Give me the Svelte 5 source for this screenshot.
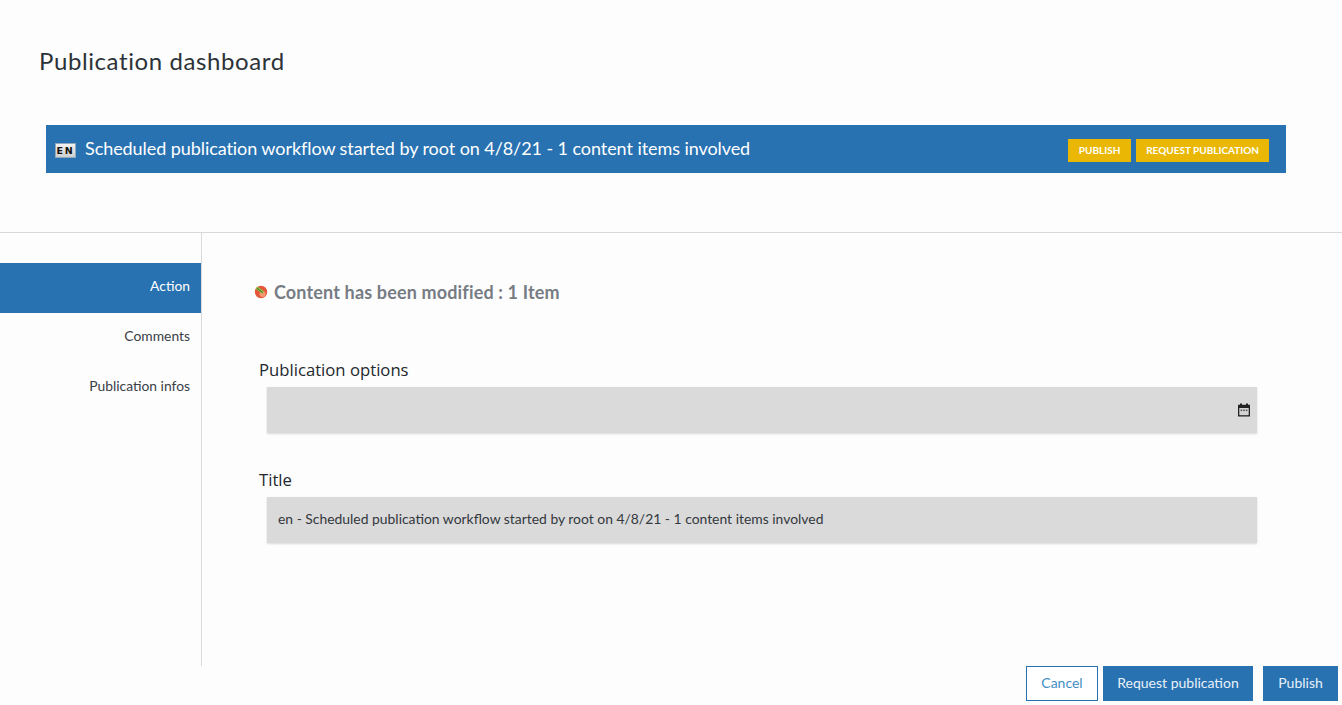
<script>
  const tabs = ['Action', 'Comments', 'Publication infos'];
</script>

<div class="page">
  <header class="head"><h1>Publication dashboard</h1></header>
  <section class="banner">
    <div class="banner-title">
      <span class="flag">EN</span>
      <span class="banner-text">Scheduled publication workflow started by root on 4/8/21 - 1 content items involved</span>
    </div>
    <div class="banner-actions">
      <button class="mini publish">PUBLISH</button>
      <button class="mini">REQUEST PUBLICATION</button>
    </div>
  </section>
  <div class="body">
    <nav class="side">
      {#each tabs as t, i}
        <div class="tab" class:active={i === 0}>{t}</div>
      {/each}
    </nav>
    <main class="content">
      <div class="status">
        <svg width="14" height="14" viewBox="0 0 14 14">
          <circle cx="7" cy="7" r="6.2" fill="#e4573a" />
          <circle cx="8.5" cy="9" r="3" fill="#f49a70" />
          <path d="M1.6 3.8 L3.6 1.6 L10 6.6 L8.4 8.8 Z" fill="#8cc246" />
          <path d="M3 3.2 L8.6 7.6" stroke="#2f5d1e" stroke-width="0.8" />
        </svg>
        <span>Content has been modified : 1 Item</span>
      </div>
      <div class="field">
        <div class="label">Publication options</div>
        <div class="input">
          <svg class="cal" width="14" height="14" viewBox="0 0 14 14">
            <path d="M3 0.5h2v1.2h4V0.5h2v1.2h2V13.5H1V1.7h2z" fill="#222" />
            <rect x="2.3" y="5" width="9.4" height="7.2" fill="#d4d4d4" />
            <rect x="3.6" y="6.5" width="1.6" height="1.6" fill="#555" />
            <rect x="6.2" y="6.5" width="1.6" height="1.6" fill="#555" />
            <rect x="8.8" y="6.5" width="1.6" height="1.6" fill="#555" />
          </svg>
        </div>
      </div>
      <div class="field second">
        <div class="label">Title</div>
        <div class="input">en - Scheduled publication workflow started by root on 4/8/21 - 1 content items involved</div>
      </div>
    </main>
  </div>
  <footer class="foot">
    <button class="btn ghost">Cancel</button>
    <button class="btn request">Request publication</button>
    <button class="btn last">Publish</button>
  </footer>
</div>

<style>
  :global(body) {
    margin: 0;
    background: #fdfdfd;
    font-family: "Lato", "Open Sans", sans-serif;
    color: #2c3338;
  }
  .page { width: 1342px; height: 705px; overflow: hidden; }
  .head { padding: 45px 0 0 39px; height: 125px; box-sizing: border-box; }
  h1 { margin: 0; font-size: 24px; font-weight: 400; line-height: 32px; letter-spacing: 0.6px; color: #2c3338; }
  .banner {
    margin: 0 56px 0 46px;
    height: 48px;
    background: #2872b2;
    color: #fff;
    display: flex;
    align-items: center;
    justify-content: space-between;
    padding: 0 17px 0 9px;
  }
  .banner-title { display: flex; align-items: center; gap: 9px; font-size: 18px; letter-spacing: -0.07px; }
  .banner-text { padding-bottom: 2px; }
  .flag {
    width: 21px; height: 15px; margin-top: 3px; background: linear-gradient(#f2f2f2, #cfcfcf); color: #111;
    font: bold 9.5px/13px "DejaVu Sans", sans-serif; text-align: center;
    letter-spacing: 1.8px; border: 1px solid #8fa9bf; box-sizing: border-box; overflow: hidden;
  }
  .banner-actions { display: flex; gap: 5px; padding-top: 2px; }
  .mini {
    height: 23px; padding: 0 10px; border: 0; background: #e9b704; color: #fff;
    font: 700 10px "Lato", sans-serif;
  }
  .mini.publish { width: 63px; padding: 0; }
  .body { margin-top: 59px; border-top: 1px solid #d9d9d9; display: flex; height: 433px; }
  .side { width: 201px; border-right: 1px solid #d9d9d9; padding-top: 30px; flex: none; }
  .tab { height: 50px; line-height: 46px; text-align: right; padding-right: 11px; font-size: 13.85px; color: #3a4046; }
  .tab.active { background: #2872b2; color: #fff; }
  .content { flex: 1; padding: 47px 85px 0 53px; }
  .status { display: flex; align-items: center; gap: 6px; height: 24px; font-size: 18px; font-weight: 700; letter-spacing: 0.15px; color: #777c84; margin-left: -1px; }
  .status svg { flex: none; }
  .field { margin-top: 54px; }
  .field.second { margin-top: 35px; }
  .label { margin-left: 4px; font-family: "Open Sans", sans-serif; font-size: 16.7px; line-height: 24px; color: #23282d; margin-bottom: 5px; }
  .input {
    margin-left: 12px; height: 46px; background: #dadada; box-shadow: 0 1px 2px rgba(0,0,0,.15);
    display: flex; align-items: center; padding: 0 11px; box-sizing: border-box;
    font-size: 13.9px; color: #33383d;
  }
  .field.second .input { padding-bottom: 4px; }
  .input .cal { margin-left: auto; margin-right: -5px; margin-top: -1px; }
  .foot { display: flex; justify-content: flex-end; padding-right: 4px; height: 35px; }
  .btn {
    height: 35px; padding: 0 0 2px; width: 75px; border: 1px solid #2872b2; background: #2872b2; color: #e8f1f8;
    font: 400 14px "Lato", sans-serif; box-sizing: border-box;
  }
  .btn.request { width: 150px; }
  .btn.ghost { background: #fff; color: #3f8ec4; width: 72px; margin-right: 5px; }
  .btn.last { margin-left: 10px; }
</style>
